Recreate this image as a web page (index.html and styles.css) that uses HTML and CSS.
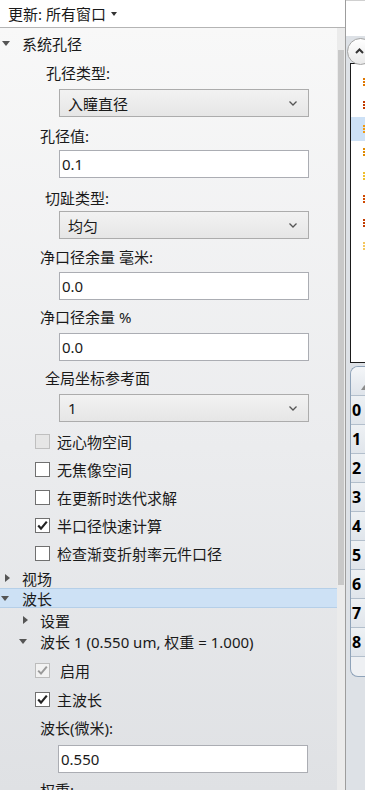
FILE: index.html
```html
<!DOCTYPE html>
<html>
<head>
<meta charset="utf-8">
<link rel="stylesheet" href="styles.css">
</head>
<body>
<div class="app">
  <div class="left">
    <div class="topbar">
      <span>更新: 所有窗口</span>
      <svg class="caret" width="6" height="4" viewBox="0 0 6 4"><polygon points="0,0 6,0 3,4" fill="#333"/></svg>
    </div>
    <div class="main">
      <div class="tree">
        <div class="node node-sys">
          <svg class="tri" width="8" height="5" viewBox="0 0 8 5"><polygon points="0,0 8,0 4,5" fill="#555"/></svg>
          <span class="ntext">系统孔径</span>
        </div>

        <div class="lbl lbl-a m10">孔径类型:</div>
        <div class="field sel m6"><span>入瞳直径</span><svg class="chev" width="8" height="5" viewBox="0 0 8 5"><polyline points="0.5,0.5 4,4 7.5,0.5" fill="none" stroke="#555" stroke-width="1.3"/></svg></div>

        <div class="lbl lbl-b m9">孔径值:</div>
        <div class="field inp m4">0.1</div>

        <div class="lbl lbl-c m10">切趾类型:</div>
        <div class="field sel m3"><span>均匀</span><svg class="chev" width="8" height="5" viewBox="0 0 8 5"><polyline points="0.5,0.5 4,4 7.5,0.5" fill="none" stroke="#555" stroke-width="1.3"/></svg></div>

        <div class="lbl lbl-b m8">净口径余量 毫米:</div>
        <div class="field inp m5">0.0</div>

        <div class="lbl lbl-b m7">净口径余量 %</div>
        <div class="field inp m6">0.0</div>

        <div class="lbl lbl-c m7">全局坐标参考面</div>
        <div class="field sel m6"><span>1</span><svg class="chev" width="8" height="5" viewBox="0 0 8 5"><polyline points="0.5,0.5 4,4 7.5,0.5" fill="none" stroke="#555" stroke-width="1.3"/></svg></div>

        <div class="checks m5">
          <div class="chk"><span class="box box-dis"></span><span class="ctext">远心物空间</span></div>
          <div class="chk"><span class="box"></span><span class="ctext">无焦像空间</span></div>
          <div class="chk"><span class="box"></span><span class="ctext">在更新时迭代求解</span></div>
          <div class="chk"><span class="box"><svg width="13" height="13" viewBox="0 0 13 13"><polyline points="2.2,6.6 5,9.6 10.8,2.6" fill="none" stroke="#222" stroke-width="2.2"/></svg></span><span class="ctext">半口径快速计算</span></div>
          <div class="chk"><span class="box"></span><span class="ctext">检查渐变折射率元件口径</span></div>
        </div>

        <div class="node m1">
          <svg class="tri tri-r" width="5" height="8" viewBox="0 0 5 8"><polygon points="0,0 5,4 0,8" fill="#555"/></svg>
          <span class="ntext">视场</span>
        </div>
        <div class="node node-selected">
          <svg class="tri tri-sel" width="8" height="5" viewBox="0 0 8 5"><polygon points="0,0 8,0 4,5" fill="#555"/></svg>
          <span class="ntext">波长</span>
        </div>
        <div class="node node-sub m2">
          <svg class="tri tri-r" width="5" height="8" viewBox="0 0 5 8"><polygon points="0,0 5,4 0,8" fill="#555"/></svg>
          <span class="ntext ntext-sub">设置</span>
        </div>
        <div class="node node-sub2 m1">
          <svg class="tri" width="8" height="5" viewBox="0 0 8 5"><polygon points="0,0 8,0 4,5" fill="#555"/></svg>
          <span class="ntext ntext-sub2">波长 1 (0.550 um, 权重 = 1.000)</span>
        </div>

        <div class="chk m5"><span class="box box-dis2"><svg width="13" height="13" viewBox="0 0 13 13"><polyline points="2.2,6.6 5,9.6 10.8,2.6" fill="none" stroke="#9a9a9a" stroke-width="2"/></svg></span><span class="ctext ctext-dis">启用</span></div>
        <div class="chk m1"><span class="box"><svg width="13" height="13" viewBox="0 0 13 13"><polyline points="2.2,6.6 5,9.6 10.8,2.6" fill="none" stroke="#222" stroke-width="2.2"/></svg></span><span class="ctext">主波长</span></div>

        <div class="lbl lbl-b m5">波长(微米):</div>
        <div class="field inp inp-w m7">0.550</div>
        <div class="lbl lbl-b m7">权重:</div>
      </div>
      <div class="scrollbar"><div class="thumb"></div></div>
    </div>
  </div>

  <div class="right">
    <div class="rtop"></div>
    <div class="roundbtn"><svg width="9" height="6" viewBox="0 0 9 6"><polyline points="1,5 4.5,1.5 8,5" fill="none" stroke="#333" stroke-width="2"/></svg></div>
    <div class="rlist">
      <div class="ritem"><span class="mark mk1"></span></div>
      <div class="ritem"><span class="mark mk2"></span></div>
      <div class="ritem ritem-sel"><span class="mark mk3"></span></div>
      <div class="ritem"><span class="mark mk4"></span></div>
      <div class="ritem"><span class="mark mk5"></span></div>
      <div class="ritem"><span class="mark mk6"></span></div>
      <div class="ritem"><span class="mark mk2"></span></div>
      <div class="ritem"><span class="mark mk7"></span></div>
    </div>
    <div class="rtable">
      <div class="rhead"><svg class="sort" width="7" height="5" viewBox="0 0 7 5"><polygon points="0,5 7,5 3.5,0" fill="#8c8c8c"/></svg></div>
      <div class="rrow">0</div>
      <div class="rrow">1</div>
      <div class="rrow">2</div>
      <div class="rrow">3</div>
      <div class="rrow">4</div>
      <div class="rrow">5</div>
      <div class="rrow">6</div>
      <div class="rrow">7</div>
      <div class="rrow">8</div>
    </div>
  </div>
</div>
</body>
</html>
```

FILE: styles.css
```css
* { box-sizing: border-box; }
html, body {
  margin: 0;
  padding: 0;
  width: 365px;
  height: 790px;
  overflow: hidden;
}
body {
  font-family: "Noto Sans", "Noto Sans CJK SC", sans-serif;
  font-size: 15px;
  color: #1a1a1a;
  background: #fff;
}
.app {
  display: flex;
  width: 365px;
  height: 790px;
}
.left {
  width: 345px;
  display: flex;
  flex-direction: column;
}
.topbar {
  height: 28px;
  background: #fff;
  border-bottom: 1px solid #b4b4b4;
  display: flex;
  align-items: center;
  padding-left: 8px;
  padding-bottom: 1px;
  gap: 5px;
  white-space: nowrap;
}
.caret { margin-top: 1px; }
.main {
  flex: 1;
  display: flex;
  min-height: 0;
  background: linear-gradient(#f8f8f8, #ebecee 55%, #dfe1e4);
}
.tree {
  width: 337px;
  overflow: hidden;
  display: flex;
  flex-direction: column;
}
.scrollbar {
  width: 8px;
  background: #ebebeb;
  padding: 0 1px;
}
.thumb {
  margin-top: 22px;
  height: 535px;
  background: #c8c8c8;
}
.m1 { margin-top: 1px; }
.m2 { margin-top: 2px; }
.m3 { margin-top: 3px; }
.m4 { margin-top: 4px; }
.m5 { margin-top: 5px; }
.m6 { margin-top: 6px; }
.m7 { margin-top: 7px; }
.m8 { margin-top: 8px; }
.m9 { margin-top: 9px; }
.m10 { margin-top: 10px; }

.node {
  height: 20px;
  display: flex;
  align-items: center;
  flex-shrink: 0;
  white-space: nowrap;
}
.node-sys { margin-top: 5px; }
.tri { margin-left: 2px; flex-shrink: 0; }
.tri-r { margin-left: 5px; }
.ntext { margin-left: 12px; }
.tri-r + .ntext { margin-left: 12px; }
.node-selected {
  background: #cde1f5;
  border-top: 1px solid #b5cfe8;
  border-bottom: 1px solid #b5cfe8;
}
.tri-sel { margin-left: 1px; }
.tri-sel + .ntext { margin-left: 13px; }
.node-sub .tri-r { margin-left: 23px; }
.node-sub .ntext-sub { margin-left: 12px; }
.node-sub2 .tri { margin-left: 19px; }
.node-sub2 .ntext-sub2 { margin-left: 13px; }

.lbl {
  height: 20px;
  line-height: 20px;
  flex-shrink: 0;
  white-space: nowrap;
}
.lbl-a { padding-left: 46px; }
.lbl-b { padding-left: 40px; }
.lbl-c { padding-left: 45px; }

.field {
  margin-left: 59px;
  width: 250px;
  height: 28px;
  flex-shrink: 0;
  display: flex;
  align-items: center;
}
.inp {
  background: #fff;
  border: 1px solid #abadb3;
  padding-left: 2px;
}
.inp-w { margin-left: 58px; }
.sel {
  background: linear-gradient(#f2f2f2, #e6e6e6);
  border: 1px solid #acacac;
  padding-left: 8px;
  padding-right: 11px;
  justify-content: space-between;
}
.chev { margin-top: 1px; }

.checks {
  display: flex;
  flex-direction: column;
}
.chk {
  height: 28px;
  display: flex;
  align-items: center;
  flex-shrink: 0;
  white-space: nowrap;
}
.box {
  margin-left: 35px;
  width: 15px;
  height: 15px;
  border: 1px solid #707070;
  background: #fff;
  display: flex;
  align-items: center;
  justify-content: center;
  flex-shrink: 0;
}
.box-dis {
  background: #e6e6e6;
  border-color: #bfbfbf;
}
.box-dis2 {
  background: #f2f2f2;
  border-color: #bcbcbc;
}
.ctext { margin-left: 7px; }
.ctext-dis { margin-left: 10px; }

/* right panel */
.right {
  width: 20px;
  border-left: 1px solid #9d9d9d;
  background: #dde1e6;
  overflow: hidden;
  position: relative;
  display: flex;
  flex-direction: column;
}
.rtop {
  height: 36px;
  background: #fff;
  border-top: 1px solid #d0d0d0;
  flex-shrink: 0;
}
.roundbtn {
  position: absolute;
  left: 1px;
  top: 38px;
  width: 27px;
  height: 27px;
  border-radius: 50%;
  border: 1px solid #a3a3a3;
  background: linear-gradient(#ffffff, #e9e9e9);
  display: flex;
  align-items: center;
  justify-content: center;
  padding-right: 2px;
  padding-bottom: 2px;
}
.rlist {
  margin-top: 27px;
  margin-left: 4px;
  width: 80px;
  height: 300px;
  border: 1px solid #1a1a1a;
  background: #fff;
  padding-top: 6px;
  flex-shrink: 0;
}
.ritem {
  height: 23.5px;
  display: flex;
  align-items: center;
}
.ritem-sel { background: #cde1f6; }
.mark {
  margin-left: 12px;
  width: 2px;
  height: 8px;
  background: repeating-linear-gradient(#e07800 0 2px, transparent 2px 3px);
}
.mk2 { background: repeating-linear-gradient(#c23b00 0 2px, transparent 2px 3px); }
.mk3 { background: repeating-linear-gradient(#f09a10 0 2px, transparent 2px 3px); }
.mk4 { background: repeating-linear-gradient(#e08a00 0 2px, transparent 2px 3px); }
.mk5 { background: repeating-linear-gradient(#f0c030 0 2px, transparent 2px 3px); }
.mk6 { background: repeating-linear-gradient(#d04a00 0 2px, transparent 2px 3px); }
.mk7 { background: repeating-linear-gradient(#f5c860 0 2px, transparent 2px 3px); }

.rtable {
  margin-top: 3px;
  margin-left: 4px;
  width: 80px;
  height: 311px;
  border: 1px solid #8fa3b9;
  border-right: none;
  border-radius: 8px 0 0 8px;
  background: #eef0f3;
  overflow: hidden;
  flex-shrink: 0;
}
.rhead {
  height: 29px;
  background: linear-gradient(#f4f6f8, #dfe4ea);
  border-bottom: 1px solid #b3bfcc;
  position: relative;
}
.sort {
  position: absolute;
  left: 10px;
  top: 18px;
}
.rrow {
  height: 29px;
  border-bottom: 1px solid #b3bfcc;
  background: linear-gradient(#eef1f4, #e0e5eb);
  font-weight: bold;
  font-size: 16px;
  line-height: 28px;
  padding-left: 1px;
  color: #000;
}
```
